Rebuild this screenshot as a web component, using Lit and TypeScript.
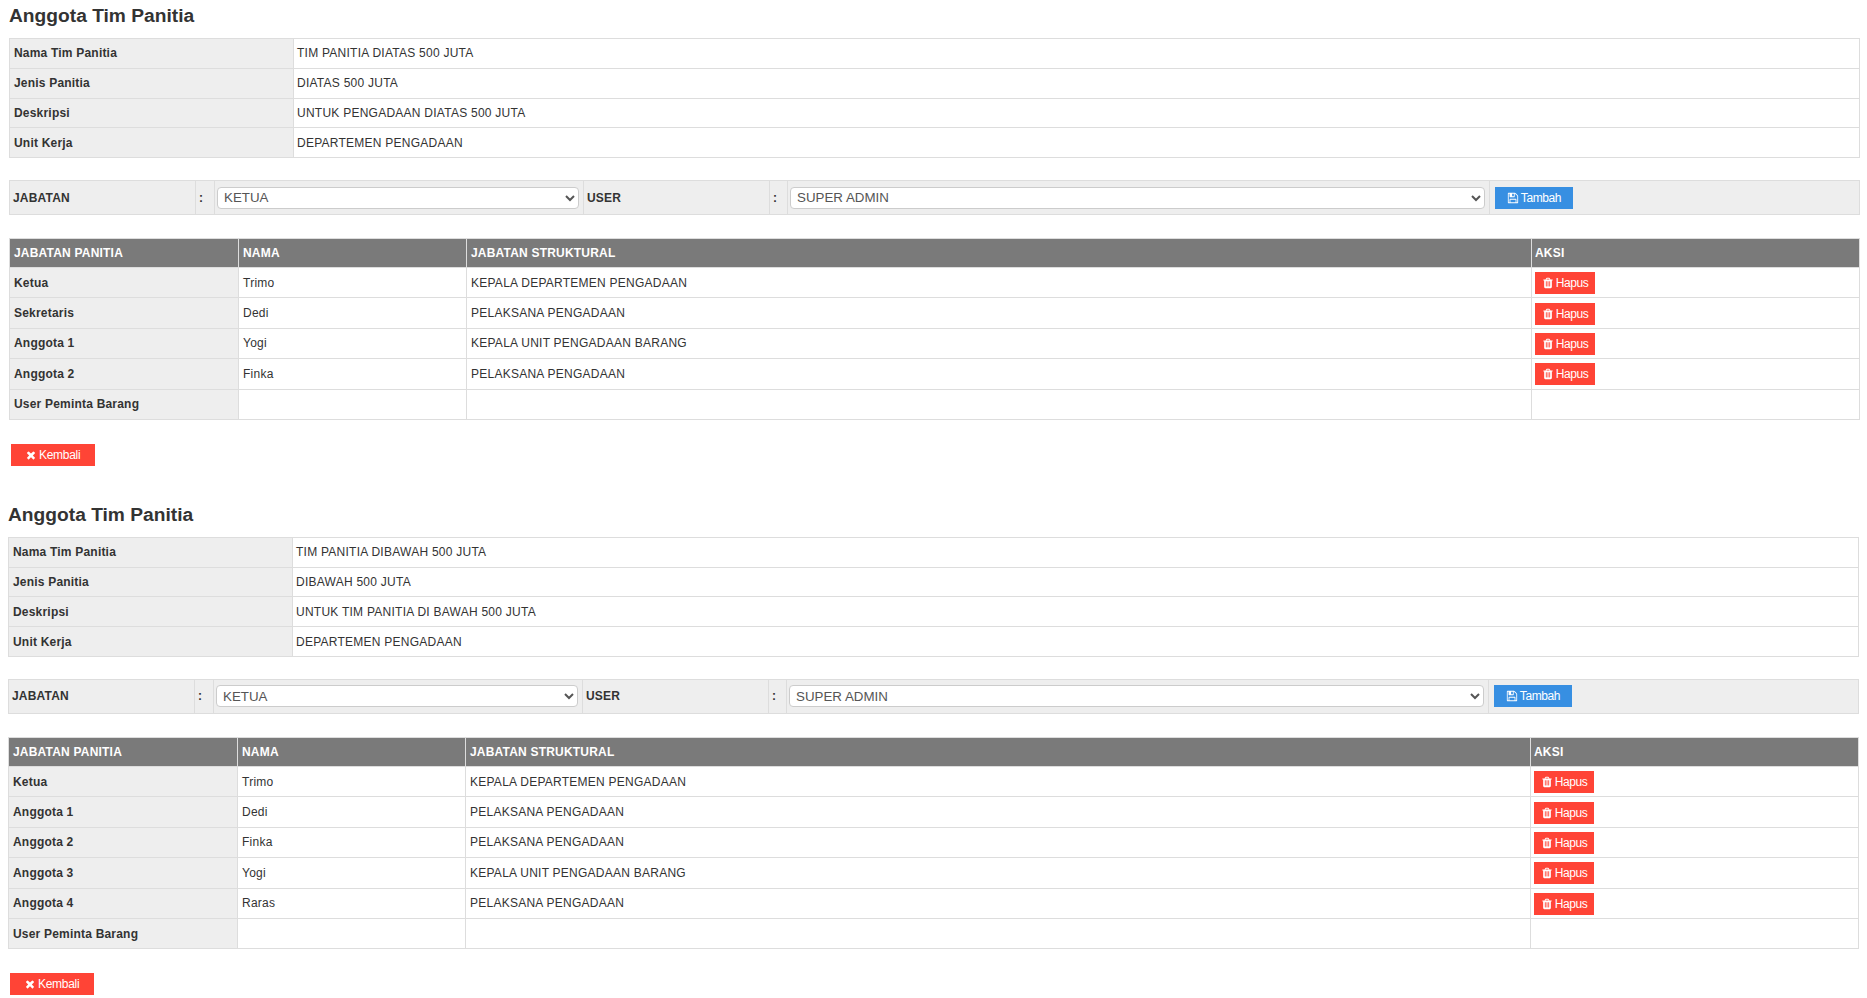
import { LitElement, html, css } from "lit";
import { customElement } from "lit/decorators.js";

const TIMES = "M1490 1322q0 40-28 68l-136 136q-28 28-68 28t-68-28l-294-294-294 294q-28 28-68 28t-68-28l-136-136q-28-28-28-68t28-68l294-294-294-294q-28-28-28-68t28-68l136-136q28-28 68-28t68 28l294 294 294-294q28-28 68-28t68 28l136 136q28 28 28 68t-28 68l-294 294 294 294q28 28 28 68z";
const TRASH = "M704 1376v-704q0-14-9-23t-23-9h-64q-14 0-23 9t-9 23v704q0 14 9 23t23 9h64q14 0 23-9t9-23zm256 0v-704q0-14-9-23t-23-9h-64q-14 0-23 9t-9 23v704q0 14 9 23t23 9h64q14 0 23-9t9-23zm256 0v-704q0-14-9-23t-23-9h-64q-14 0-23 9t-9 23v704q0 14 9 23t23 9h64q14 0 23-9t9-23zm-544-992h448l-48-117q-7-9-17-11h-317q-10 2-17 11zm928 32v64q0 14-9 23t-23 9h-96v948q0 83-47 143.5t-113 60.5h-832q-66 0-113-58.5t-47-141.5v-952h-96q-14 0-23-9t-9-23v-64q0-14 9-23t23-9h309l70-167q15-37 54-63t79-26h320q40 0 79 26t54 63l70 167h309q14 0 23 9t9 23z";
const SAVE = "M512 1536h768v-384h-768v384zm896 0h128v-896q0-14-10-38.5t-20-34.5l-281-281q-10-10-34-20t-39-10v416q0 40-28 68t-68 28h-576q-40 0-68-28t-28-68v-416h-128v1280h128v-416q0-40 28-68t68-28h832q40 0 68 28t28 68v416zm-384-928v-320q0-13-9.5-22.5t-22.5-9.5h-192q-13 0-22.5 9.5t-9.5 22.5v320q0 13 9.5 22.5t22.5 9.5h192q13 0 22.5-9.5t9.5-22.5zm640 32v928q0 40-28 68t-68 28h-1344q-40 0-68-28t-28-68v-1344q0-40 28-68t68-28h928q40 0 88 20t76 48l280 280q28 28 48 76t20 88z";

const icon = (d: string) => html`<svg class="ic" viewBox="0 0 1792 1792" aria-hidden="true"><path fill="currentColor" d=${d}></path></svg>`;

interface Member { role: string; name: string; pos: string; }
interface Team { info: [string, string][]; members: Member[]; }

const TEAMS: Team[] = [
  {
    info: [
      ["Nama Tim Panitia", "TIM PANITIA DIATAS 500 JUTA"],
      ["Jenis Panitia", "DIATAS 500 JUTA"],
      ["Deskripsi", "UNTUK PENGADAAN DIATAS 500 JUTA"],
      ["Unit Kerja", "DEPARTEMEN PENGADAAN"],
    ],
    members: [
      { role: "Ketua", name: "Trimo", pos: "KEPALA DEPARTEMEN PENGADAAN" },
      { role: "Sekretaris", name: "Dedi", pos: "PELAKSANA PENGADAAN" },
      { role: "Anggota 1", name: "Yogi", pos: "KEPALA UNIT PENGADAAN BARANG" },
      { role: "Anggota 2", name: "Finka", pos: "PELAKSANA PENGADAAN" },
      { role: "User Peminta Barang", name: "", pos: "" },
    ],
  },
  {
    info: [
      ["Nama Tim Panitia", "TIM PANITIA DIBAWAH 500 JUTA"],
      ["Jenis Panitia", "DIBAWAH 500 JUTA"],
      ["Deskripsi", "UNTUK TIM PANITIA DI BAWAH 500 JUTA"],
      ["Unit Kerja", "DEPARTEMEN PENGADAAN"],
    ],
    members: [
      { role: "Ketua", name: "Trimo", pos: "KEPALA DEPARTEMEN PENGADAAN" },
      { role: "Anggota 1", name: "Dedi", pos: "PELAKSANA PENGADAAN" },
      { role: "Anggota 2", name: "Finka", pos: "PELAKSANA PENGADAAN" },
      { role: "Anggota 3", name: "Yogi", pos: "KEPALA UNIT PENGADAAN BARANG" },
      { role: "Anggota 4", name: "Raras", pos: "PELAKSANA PENGADAAN" },
      { role: "User Peminta Barang", name: "", pos: "" },
    ],
  },
];

@customElement("app-root")
export class AppRoot extends LitElement {
  static styles = css`
    :host { display: block; font-family: "Liberation Sans", Arial, sans-serif; font-size: 12px; color: #333; background: #fff; }
    * { box-sizing: border-box; }
    .sec { width: 1851px; margin-left: 9px; }
    .sec + .sec { margin-left: 8px; margin-top: 33px; }
    h2 { margin: 0; height: 38px; padding-top: 4px; font-size: 19.2px; line-height: 23px; font-weight: 700; color: #333; }
    table { width: 100%; table-layout: fixed; border-collapse: collapse; }
    td, th { border: 1px solid #ddd; padding: 0 4px; text-align: left; vertical-align: middle; font-weight: 400; letter-spacing: .25px; }
    td.lab { background: #eee; font-weight: 700; letter-spacing: .2px; }
    .info td { height: 29.75px; }
    .info td:last-child { padding-left: 3px; }
    .form { margin-top: 22px; }
    .form td { height: 34px; background: #eee; font-weight: 700; letter-spacing: .2px; padding: 0 4px 0 2px; }
    .form td:nth-child(1), .form td:nth-child(2), .form td:nth-child(4), .form td:nth-child(5) { padding-left: 3px; }
    .form td:last-child { padding-left: 5px; }
    select { width: 100%; height: 22px; display: block; font: 13.33px "Liberation Sans", Arial, sans-serif; color: #555; background: #fff; border: 1px solid #ccc; border-radius: 4px; padding: 0 2px; }
    .members { margin-top: 23px; }
    .members th { height: 29px; background: #7a7a7a; color: #fff; font-weight: 700; letter-spacing: .2px; }
    .members td { height: 30.4px; }
    .members td:last-child, .members th:last-child { padding-left: 3px; }
    .btn { display: inline-flex; align-items: center; justify-content: center; gap: 2px; height: 22px; border: 0; padding: 0; color: #fff; font: 12px "Liberation Sans", Arial, sans-serif; letter-spacing: -.4px; vertical-align: middle; }
    .ic { width: 12px; height: 12px; display: block; flex: none; }
    .red { background: #ff4436; }
    .blue { background: #378fe2; }
    .tambah { width: 78px; }
    .hapus { width: 60px; margin-top: 1px; }
    .kembali { width: 84px; display: flex; justify-content: flex-start; padding-left: 14px; letter-spacing: -.3px; margin: 24px 0 0 2px; }
  `;

  private team(t: Team) {
    return html`<section class="sec">
      <h2>Anggota Tim Panitia</h2>
      <table class="info">
        <colgroup><col style="width:284px" /><col /></colgroup>
        ${t.info.map(([k, v]) => html`<tr><td class="lab">${k}</td><td>${v}</td></tr>`)}
      </table>
      <table class="form">
        <colgroup>
          <col style="width:186px" /><col style="width:19px" /><col style="width:369px" />
          <col style="width:186px" /><col style="width:18px" /><col style="width:702px" /><col />
        </colgroup>
        <tr>
          <td>JABATAN</td><td>:</td>
          <td><select><option>KETUA</option></select></td>
          <td>USER</td><td>:</td>
          <td><select><option>SUPER ADMIN</option></select></td>
          <td><button class="btn blue tambah">${icon(SAVE)}Tambah</button></td>
        </tr>
      </table>
      <table class="members">
        <colgroup><col style="width:229px" /><col style="width:228px" /><col style="width:1065px" /><col /></colgroup>
        <tr><th>JABATAN PANITIA</th><th>NAMA</th><th>JABATAN STRUKTURAL</th><th>AKSI</th></tr>
        ${t.members.map((m) => html`<tr>
          <td class="lab">${m.role}</td><td>${m.name}</td><td>${m.pos}</td>
          <td>${m.name ? html`<button class="btn red hapus">${icon(TRASH)}Hapus</button>` : ""}</td>
        </tr>`)}
      </table>
      <button class="btn red kembali">${icon(TIMES)}Kembali</button>
    </section>`;
  }

  render() {
    return html`${TEAMS.map((t) => this.team(t))}`;
  }
}
